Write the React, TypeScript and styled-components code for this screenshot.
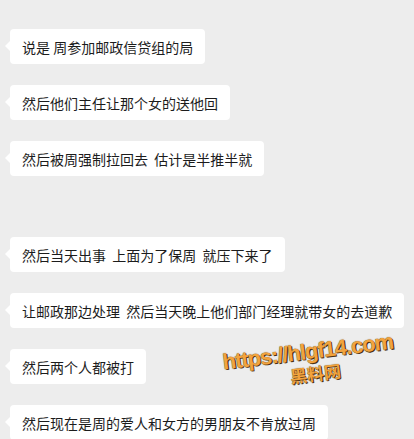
import React from "react";
import styled, { createGlobalStyle } from "styled-components";

const GlobalStyle = createGlobalStyle`
  html, body {
    margin: 0;
    padding: 0;
    background: #ededed;
  }
  #root {
    width: 414px;
    height: 439px;
    overflow: hidden;
  }
`;

const Page = styled.div`
  position: relative;
  width: 414px;
  height: 439px;
  overflow: hidden;
  background: #ededed;
  box-sizing: border-box;
  padding: 29px 0 0 10px;
  display: flex;
  flex-direction: column;
  align-items: flex-start;
  gap: 21px;
  font-family: "Noto Sans CJK SC", "Noto Sans", sans-serif;
`;

const Bubble = styled.div<{ $extraTop?: number }>`
  position: relative;
  flex: none;
  height: 35px;
  box-sizing: border-box;
  padding: 0 12px;
  display: flex;
  align-items: center;
  background: #ffffff;
  border-radius: 4px;
  color: #1c1c1c;
  font-size: 14px;
  white-space: pre;
  margin-top: ${(p) => p.$extraTop ?? 0}px;

  &::before {
    content: "";
    position: absolute;
    left: -5px;
    top: 12px;
    border-top: 5px solid transparent;
    border-bottom: 5px solid transparent;
    border-right: 5px solid #ffffff;
  }
`;

const Watermark = styled.div`
  position: absolute;
  left: 214px;
  top: 340px;
  width: 190px;
  display: flex;
  flex-direction: column;
  align-items: center;
  transform: rotate(-7deg);
  pointer-events: none;
  color: #f2a33e;
  font-family: "Liberation Sans", Arial, sans-serif;
  font-weight: 700;
  text-shadow: 1px 1px 0 #4a3212, 0 0 1px #6a4a1c;
`;

const WatermarkUrl = styled.div`
  font-size: 22px;
  letter-spacing: -1px;
  line-height: 24px;
`;

const WatermarkName = styled.div`
  font-family: "Noto Sans CJK SC", sans-serif;
  font-size: 17px;
  line-height: 20px;
  margin-left: 10px;
`;

const messages: { text: string; extraTop?: number }[] = [
  { text: "说是 周参加邮政信贷组的局" },
  { text: "然后他们主任让那个女的送他回" },
  { text: "然后被周强制拉回去  估计是半推半就" },
  { text: "然后当天出事  上面为了保周  就压下来了", extraTop: 40 },
  { text: "让邮政那边处理  然后当天晚上他们部门经理就带女的去道歉" },
  { text: "然后两个人都被打" },
  { text: "然后现在是周的爱人和女方的男朋友不肯放过周" },
];

export default function App() {
  return (
    <>
      <GlobalStyle />
      <Page>
        {messages.map((m, i) => (
          <Bubble key={i} $extraTop={m.extraTop}>
            {m.text}
          </Bubble>
        ))}
        <Watermark>
          <WatermarkUrl>https://hlgf14.com</WatermarkUrl>
          <WatermarkName>黑料网</WatermarkName>
        </Watermark>
      </Page>
    </>
  );
}
